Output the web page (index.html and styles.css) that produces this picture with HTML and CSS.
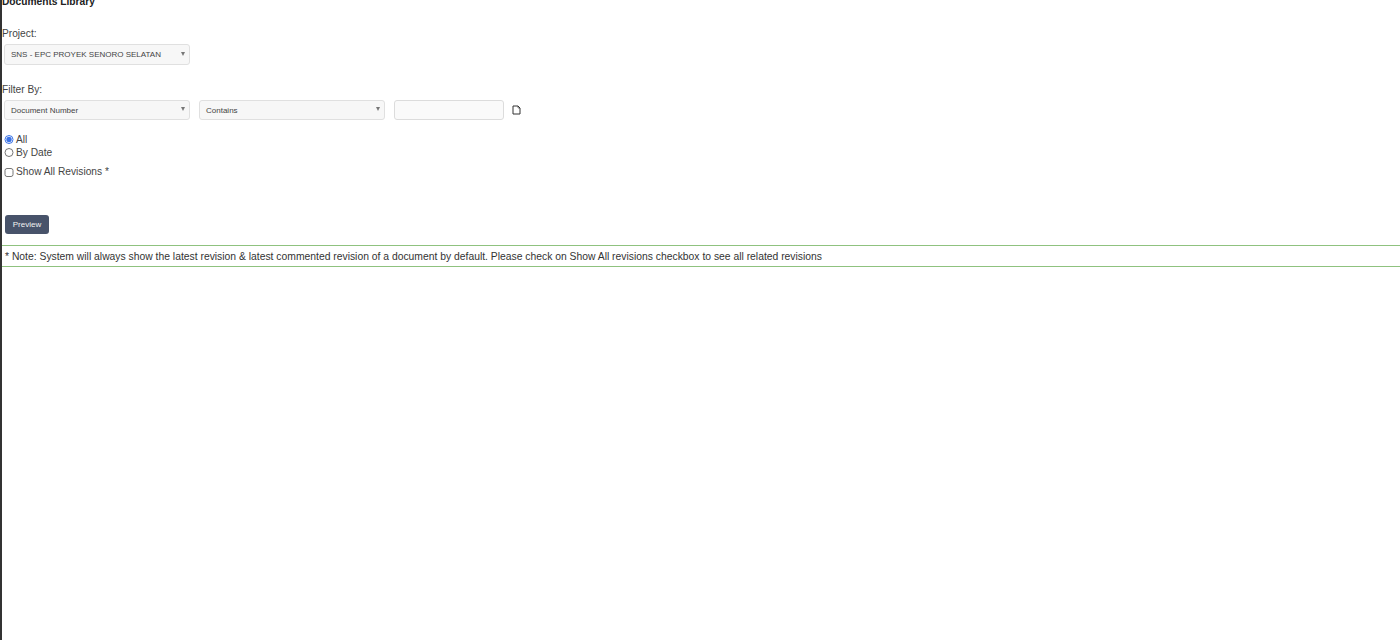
FILE: index.html
```html
<!DOCTYPE html>
<html lang="en">
<head>
<meta charset="utf-8">
<title>Documents Library</title>
<link rel="stylesheet" href="styles.css">
</head>
<body>
<main class="page">
  <h1 class="title">Documents Library</h1>
  <label class="field-label project-label">Project:</label>
  <div class="row">
    <div class="select select-wide"><span>SNS - EPC PROYEK SENORO SELATAN</span><i class="caret"></i></div>
  </div>
  <label class="field-label filter-label">Filter By:</label>
  <div class="row filter-row">
    <div class="select select-wide"><span>Document Number</span><i class="caret"></i></div>
    <div class="select select-wide"><span>Contains</span><i class="caret"></i></div>
    <input class="text-input" type="text">
    <svg class="doc-icon" width="9" height="10" viewBox="0 0 9 10" fill="none" stroke="#333" stroke-width="1">
      <path d="M1 1H6L8 3V9H1Z"/>
      <path d="M6 1V3H8" stroke-width=".6"/>
    </svg>
  </div>
  <div class="options">
    <label class="option"><input type="radio" name="range" checked><span>All</span></label>
    <label class="option"><input type="radio" name="range"><span>By Date</span></label>
    <label class="option option-check"><input type="checkbox"><span>Show All Revisions *</span></label>
  </div>
  <button class="preview" type="button">Preview</button>
  <p class="note">* Note: System will always show the latest revision &amp; latest commented revision of a document by default. Please check on Show All revisions checkbox to see all related revisions</p>
</main>
</body>
</html>
```

FILE: styles.css
```css
html, body {
  margin: 0;
  padding: 0;
  height: 100%;
  overflow: hidden;
  background: #fff;
}
body {
  font-family: "Liberation Sans", Arial, sans-serif;
  color: #333;
}
.page {
  box-sizing: border-box;
  height: 640px;
  border-left: 2px solid #333;
  overflow: hidden;
}
.title {
  margin: -5px 0 0 0;
  font-size: 10.2px;
  line-height: 14px;
  font-weight: 700;
  color: #222;
}
.field-label {
  display: block;
  font-size: 10.2px;
  line-height: 14px;
  color: #444;
}
.project-label { margin-top: 18px; }
.filter-label { margin-top: 18px; }
.row {
  display: flex;
  align-items: center;
  margin: 3px 0 0 2px;
}
.filter-row { gap: 9px; margin-top: 3px; }
.select {
  box-sizing: border-box;
  display: flex;
  align-items: center;
  justify-content: space-between;
  height: 20.5px;
  padding: 1px 4px 0 6px;
  background: #f7f7f7;
  border: 1px solid #e0e0e0;
  border-radius: 3px;
  font-size: 8px;
  color: #444;
}
.select-wide { width: 186px; }
.caret {
  width: 0;
  height: 0;
  border-left: 2.5px solid transparent;
  border-right: 2.5px solid transparent;
  border-top: 4px solid #777;
  margin-bottom: 2px;
}
.text-input {
  box-sizing: border-box;
  width: 110px;
  height: 20.5px;
  padding: 0;
  background: #fafafa;
  border: 1px solid #dcdcdc;
  border-radius: 3px;
}
.doc-icon { display: block; margin: 1px 0 0 -1px; }
.options { margin: 12.5px 0 0 2px; }
.option {
  display: flex;
  align-items: center;
  height: 13px;
  font-size: 10.2px;
  color: #444;
}
.option input {
  width: 9.5px;
  height: 9.5px;
  margin: 1px 2.5px 0 0;
  accent-color: #3b73e6;
}
.option-check { margin-top: 6px; }
.option-check input { margin-top: 3px; }
.preview {
  display: block;
  margin: 37px 0 0 3px;
  width: 44px;
  height: 19px;
  padding: 0;
  background: #48536a;
  border: 0;
  border-radius: 3px;
  color: #f2f2f2;
  font: 8px "Liberation Sans", Arial, sans-serif;
}
.note {
  box-sizing: border-box;
  margin: 11px 0 0 0;
  height: 22px;
  padding: 1px 0 0 3px;
  border-top: 1px solid #8fc27f;
  border-bottom: 1px solid #8fc27f;
  font-size: 10.35px;
  line-height: 20px;
  color: #333;
  white-space: nowrap;
}
```
